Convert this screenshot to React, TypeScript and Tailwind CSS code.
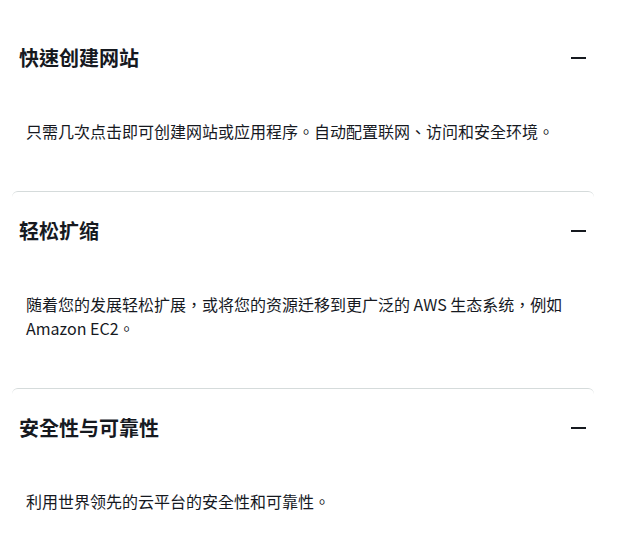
import React from "react";

const items = [
  {
    title: "快速创建网站",
    body: "只需几次点击即可创建网站或应用程序。自动配置联网、访问和安全环境。",
  },
  {
    title: "轻松扩缩",
    body: "随着您的发展轻松扩展，或将您的资源迁移到更广泛的 AWS 生态系统，例如 Amazon EC2。",
  },
  {
    title: "安全性与可靠性",
    body: "利用世界领先的云平台的安全性和可靠性。",
  },
];

export default function App() {
  return (
    <div
      className="w-[617px] h-[552px] bg-white overflow-hidden"
      style={{ fontFamily: '"Noto Sans CJK TC", "Noto Sans", sans-serif' }}
    >
      <div className="ml-3 w-[582px] pt-[18px]">
        {items.map((item, i) => (
          <div
            key={item.title}
            className={i === 0 ? "border-t border-transparent" : "border-t border-[#d5dbdb] rounded-t-md"}
          >
            <div className="flex items-center justify-between pl-[7px] pr-[8px] pt-[24px] h-[54px]">
              <h3 className="text-[20px] leading-[30px] font-bold text-[#16191f]">{item.title}</h3>
              <span className="block w-[15px] h-[2px] bg-[#16191f]" />
            </div>
            <p className="px-[14px] pt-[46px] pb-[48px] text-[16px] leading-6 text-[#16191f]">
              {item.body}
            </p>
          </div>
        ))}
      </div>
    </div>
  );
}
